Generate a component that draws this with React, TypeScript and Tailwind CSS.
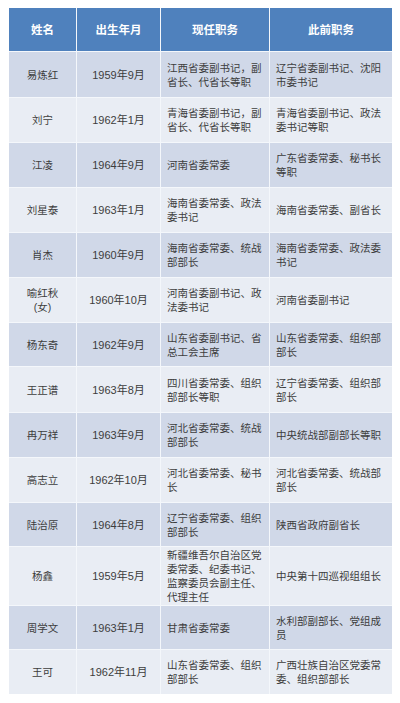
const font = { fontFamily: '"Liberation Sans", "Noto Sans CJK SC", sans-serif' };

type Row = { name: string[]; born: string; now: string[]; before: string[]; h: string };

const rows: Row[] = [
  { name: ["易炼红"], born: "1959年9月", now: ["江西省委副书记，副", "省长、代省长等职"], before: ["辽宁省委副书记、沈阳", "市委书记"], h: "h-[45px]" },
  { name: ["刘宁"], born: "1962年1月", now: ["青海省委副书记，副", "省长、代省长等职"], before: ["青海省委副书记、政法", "委书记等职"], h: "h-[44px]" },
  { name: ["江凌"], born: "1964年9月", now: ["河南省委常委"], before: ["广东省委常委、秘书长", "等职"], h: "h-[44px]" },
  { name: ["刘星泰"], born: "1963年1月", now: ["海南省委常委、政法", "委书记"], before: ["海南省委常委、副省长"], h: "h-[44px]" },
  { name: ["肖杰"], born: "1960年9月", now: ["海南省委常委、统战", "部部长"], before: ["海南省委常委、政法委", "书记"], h: "h-[44px]" },
  { name: ["喻红秋", "(女)"], born: "1960年10月", now: ["河南省委副书记、政", "法委书记"], before: ["河南省委副书记"], h: "h-[44px]" },
  { name: ["杨东奇"], born: "1962年9月", now: ["山东省委副书记、省", "总工会主席"], before: ["山东省委常委、组织部", "部长"], h: "h-[43px]" },
  { name: ["王正谱"], born: "1963年8月", now: ["四川省委常委、组织", "部部长等职"], before: ["辽宁省委常委、组织部", "部长"], h: "h-[45px]" },
  { name: ["冉万祥"], born: "1963年9月", now: ["河北省委常委、统战", "部部长"], before: ["中央统战部副部长等职"], h: "h-[44px]" },
  { name: ["高志立"], born: "1962年10月", now: ["河北省委常委、秘书", "长"], before: ["河北省委常委、统战部", "部长"], h: "h-[44px]" },
  { name: ["陆治原"], born: "1964年8月", now: ["辽宁省委常委、组织", "部部长"], before: ["陕西省政府副省长"], h: "h-[43px]" },
  { name: ["杨鑫"], born: "1959年5月", now: ["新疆维吾尔自治区党", "委常委、纪委书记、", "监察委员会副主任、", "代理主任"], before: ["中央第十四巡视组组长"], h: "h-[58px]" },
  { name: ["周学文"], born: "1963年1月", now: ["甘肃省委常委"], before: ["水利部副部长、党组成", "员"], h: "h-[43px]" },
  { name: ["王可"], born: "1962年11月", now: ["山东省委常委、组织", "部部长"], before: ["广西壮族自治区党委常", "委、组织部部长"], h: "h-[44px]" },
];

function Lines({ lines }: { lines: string[] }) {
  return (
    <div className="flex flex-col">
      {lines.map((l) => (
        <span key={l} className="whitespace-nowrap">
          {l}
        </span>
      ))}
    </div>
  );
}

export default function App() {
  return (
    <div className="w-[400px] h-[703px] bg-white pt-[8px] pl-[9px]" style={font}>
      <div className="w-[383px] grid grid-cols-[67px_83px_108px_122px] gap-[1px] bg-[#f4f7fb] text-[10.5px] leading-[14px] text-[#3d3d3d]">
        {["姓名", "出生年月", "现任职务", "此前职务"].map((t) => (
          <div
            key={t}
            className="h-[43px] bg-[#4f81bd] text-white font-bold text-[11.5px] flex items-center justify-center"
          >
            {t}
          </div>
        ))}
        {rows.map((r, i) => {
          const bg = i % 2 === 0 ? "bg-[#d0d8e8]" : "bg-[#e9edf4]";
          return [
            <div key={i + "a"} className={`${r.h} ${bg} flex items-center justify-center text-center`}>
              <Lines lines={r.name} />
            </div>,
            <div key={i + "b"} className={`${r.h} ${bg} flex items-center justify-center text-[11px]`}>
              {r.born}
            </div>,
            <div key={i + "c"} className={`${r.h} ${bg} flex items-center pl-[6px]`}>
              <Lines lines={r.now} />
            </div>,
            <div key={i + "d"} className={`${r.h} ${bg} flex items-center pl-[6px]`}>
              <Lines lines={r.before} />
            </div>,
          ];
        })}
      </div>
    </div>
  );
}
